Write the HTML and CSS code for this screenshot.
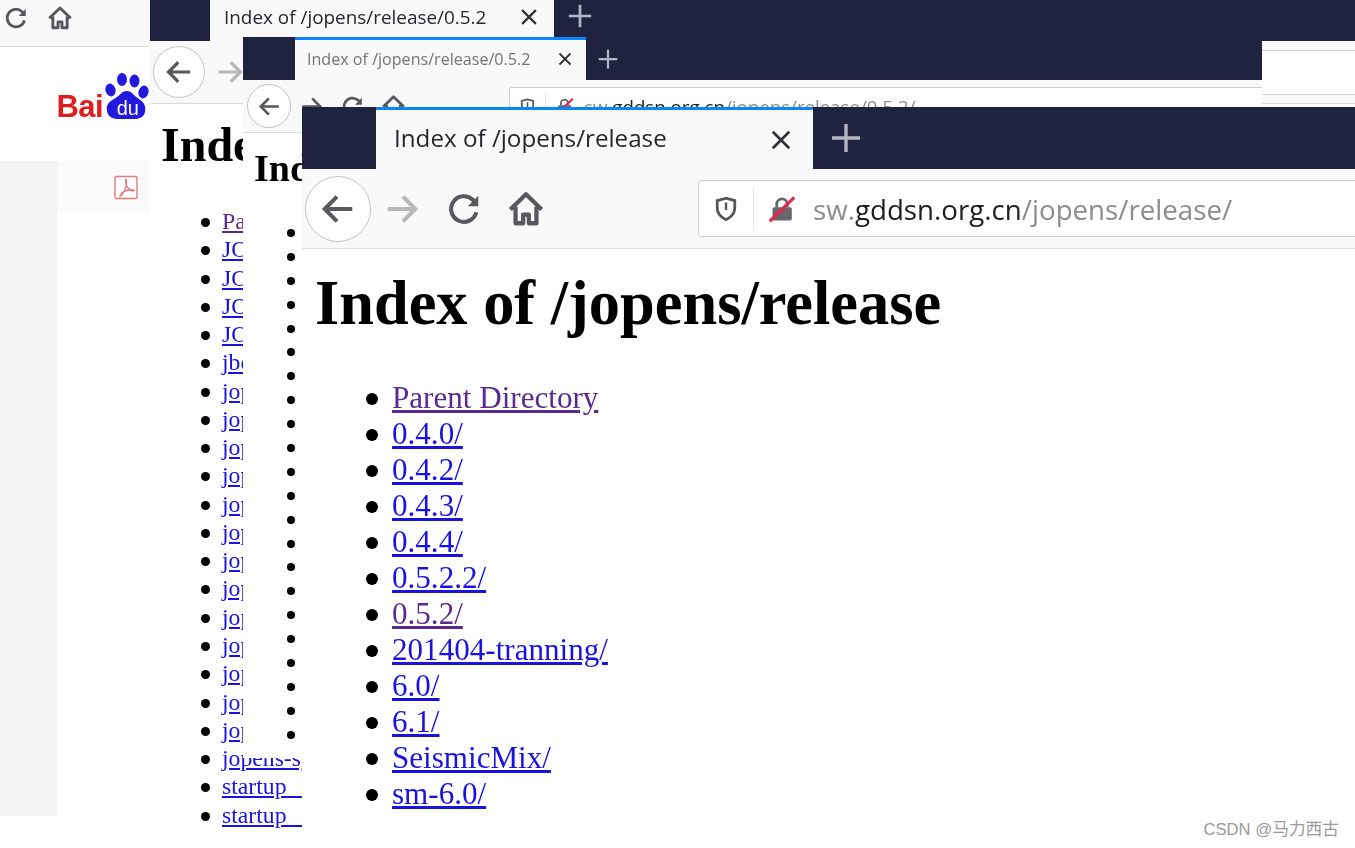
FILE: index.html
```html
<!DOCTYPE html>
<html lang="en">
<head>
    <meta charset="UTF-8">
    <meta name="viewport" content="width=device-width, initial-scale=1.0">
    <title>Index of /jopens/release</title>
    <link rel="stylesheet" href="styles.css">
</head>
<body>
    <svg class="defs" width="0" height="0">
        <symbol id="i-back" viewBox="0 0 16 16"><path d="M14 8H2.6M7.6 2.8 2.4 8l5.2 5.2" fill="none" stroke="currentColor" stroke-width="1.7"/></symbol>
        <symbol id="i-forward" viewBox="0 0 16 16"><path d="M2 8h11.4M8.4 2.8 13.6 8l-5.2 5.2" fill="none" stroke="currentColor" stroke-width="1.7"/></symbol>
        <symbol id="i-reload" viewBox="0 0 16 16"><path d="M13.2 9.4A5.4 5.4 0 1 1 11.6 4L13.2 5.6" fill="none" stroke="currentColor" stroke-width="1.7"/><path d="M14 2.4v4.4H9.6z" fill="currentColor"/></symbol>
        <symbol id="i-home" viewBox="0 0 16 16"><path d="M1.4 8.2 8 1.8l6.6 6.4M3.6 7v7h3.2v-3.6h2.4V14h3.2V7" fill="none" stroke="currentColor" stroke-width="1.8" stroke-linejoin="round"/></symbol>
        <symbol id="i-close" viewBox="0 0 16 16"><path d="M2.5 2.5l11 11M13.5 2.5l-11 11" fill="none" stroke="currentColor" stroke-width="1.8"/></symbol>
        <symbol id="i-plus" viewBox="0 0 16 16"><path d="M8 .5v15M.5 8h15" fill="none" stroke="currentColor" stroke-width="1.8"/></symbol>
        <symbol id="i-shield" viewBox="0 0 16 16"><path d="M8 1.4 2.6 2.8v4.6c0 3.2 2.4 5.8 5.4 7.2 3-1.4 5.4-4 5.4-7.2V2.8z" fill="none" stroke="#55555c" stroke-width="1.7"/><path d="M8 4v4.6" stroke="#55555c" stroke-width="1.5"/></symbol>
        <symbol id="i-lock" viewBox="0 0 16 16"><path d="M5 7V5.2a3 3 0 0 1 6 0V7" fill="none" stroke="#66666c" stroke-width="1.6"/><rect x="2.6" y="7" width="11" height="7.6" rx="1" fill="#66666c"/><path d="M1 15 15 1.4" stroke="#e22850" stroke-width="1.8"/></symbol>
    </svg>

    <!-- oldest window, only its left edge shows -->
    <div class="win win-old">
        <div class="toolbar">
            <svg class="icon"><use href="#i-reload"/></svg>
            <svg class="icon"><use href="#i-home"/></svg>
        </div>
        <div class="baidu">
            <span class="bai">Bai</span>
            <svg class="paw" viewBox="0 0 44 46">
                <ellipse cx="17" cy="6.5" rx="5" ry="6.5" fill="#2319dc"/>
                <ellipse cx="29.5" cy="8" rx="5" ry="6.5" fill="#2319dc"/>
                <ellipse cx="5.5" cy="17" rx="5" ry="6.5" fill="#2319dc" transform="rotate(-15 5.5 17)"/>
                <ellipse cx="38.5" cy="19" rx="5" ry="6.5" fill="#2319dc" transform="rotate(15 38.5 19)"/>
                <path d="M22 18c5 0 7 5 12 8 6 4 7 8 6 13-1 5-6 7-10 7H13c-5 0-10-2-11-8-1-5 1-9 7-12 6-3 7-8 13-8z" fill="#2319dc"/>
            </svg>
            <span class="du">du</span>
        </div>
        <div class="lower">
            <div class="side"></div>
            <div class="pdfbar">
                <svg class="pdf" viewBox="0 0 24 24"><rect x="1" y="1" width="22" height="22" rx="2" fill="#fff" stroke="#e8787a" stroke-width="1.4"/><path d="M12 3.5c-.8 3 .4 7 2 9 1.5 2 4 3 6 2.5-2-1.5-6-.5-9 .5-2 .8-4 3-5 5 2-.5 4.5-5 6-9 .5-2.5.6-5.5 0-8z" fill="none" stroke="#e8787a" stroke-width="1.4"/></svg>
            </div>
        </div>
    </div>

    <div class="win win-a">
        <div class="tabstrip">
            <div class="tab">
                <span class="tab-title">Index of /jopens/release/0.5.2</span>
                <svg class="close"><use href="#i-close"/></svg>
            </div>
            <svg class="plus"><use href="#i-plus"/></svg>
        </div>
        <div class="toolbar">
            <span class="backbtn"><svg class="icon"><use href="#i-back"/></svg></span>
            <svg class="icon fwd"><use href="#i-forward"/></svg>
            <div class="urlbar"></div>
        </div>
        <div class="page">
            <h1>Index of /jopens/release/0.5.2</h1>
            <ul>
                <li><a class="seen" href="#">Parent Directory</a></li>
                <li><a href="#">JOPENS-Linux.tar</a></li>
                <li><a href="#">JOPENS-Linux.zip</a></li>
                <li><a href="#">JOPENS-Win32.zip</a></li>
                <li><a href="#">JOPENS-Win64.zip</a></li>
                <li><a href="#">jboss-4.2.tar.gz</a></li>
                <li><a href="#">jopens-client.tar</a></li>
                <li><a href="#">jopens-db.tar</a></li>
                <li><a href="#">jopens-doc.tar</a></li>
                <li><a href="#">jopens-gsm.tar</a></li>
                <li><a href="#">jopens-mss.tar</a></li>
                <li><a href="#">jopens-nmx.tar</a></li>
                <li><a href="#">jopens-rts.tar</a></li>
                <li><a href="#">jopens-sds.tar</a></li>
                <li><a href="#">jopens-seed.tar</a></li>
                <li><a href="#">jopens-sma.tar</a></li>
                <li><a href="#">jopens-ssh.tar</a></li>
                <li><a href="#">jopens-sta.tar</a></li>
                <li><a href="#">jopens-svr.tar</a></li>
                <li><a href="#">jopens-sys.tar</a></li>
                <li><a href="#">startup__a.sh</a></li>
                <li><a href="#">startup__b.sh</a></li>
            </ul>
        </div>
    </div>

    <div class="win win-b">
        <div class="tabstrip">
            <div class="tab">
                <span class="tab-title">Index of /jopens/release/0.5.2</span>
                <svg class="close"><use href="#i-close"/></svg>
            </div>
            <svg class="plus"><use href="#i-plus"/></svg>
        </div>
        <div class="toolbar">
            <span class="backbtn"><svg class="icon"><use href="#i-back"/></svg></span>
            <svg class="icon fwd dark"><use href="#i-forward"/></svg>
            <svg class="icon"><use href="#i-reload"/></svg>
            <svg class="icon"><use href="#i-home"/></svg>
            <div class="urlbar">
                <svg class="shield"><use href="#i-shield"/></svg>
                <span class="sep"></span>
                <svg class="lock"><use href="#i-lock"/></svg>
                <span class="url">sw.<b>gddsn.org.cn</b>/jopens/release/0.5.2/</span>
            </div>
        </div>
        <div class="page">
            <h1>Index of /jopens/release/0.5.2</h1>
            <ul>
                <li></li><li></li><li></li><li></li><li></li><li></li>
                <li></li><li></li><li></li><li></li><li></li><li></li>
                <li></li><li></li><li></li><li></li><li></li><li></li>
                <li></li><li></li><li></li><li></li>
            </ul>
        </div>
    </div>

    <div class="win win-c">
        <div class="tabstrip">
            <div class="tab">
                <span class="tab-title">Index of /jopens/release</span>
                <svg class="close"><use href="#i-close"/></svg>
            </div>
            <svg class="plus"><use href="#i-plus"/></svg>
        </div>
        <div class="toolbar">
            <span class="backbtn"><svg class="icon"><use href="#i-back"/></svg></span>
            <svg class="icon fwd"><use href="#i-forward"/></svg>
            <svg class="icon"><use href="#i-reload"/></svg>
            <svg class="icon"><use href="#i-home"/></svg>
            <div class="urlbar">
                <svg class="shield"><use href="#i-shield"/></svg>
                <span class="sep"></span>
                <svg class="lock"><use href="#i-lock"/></svg>
                <span class="url">sw.<b>gddsn.org.cn</b>/jopens/release/</span>
            </div>
        </div>
        <div class="page">
            <h1>Index of /jopens/release</h1>
            <ul>
                <li><a class="seen" href="#">Parent Directory</a></li>
                <li><a href="#">0.4.0/</a></li>
                <li><a href="#">0.4.2/</a></li>
                <li><a href="#">0.4.3/</a></li>
                <li><a href="#">0.4.4/</a></li>
                <li><a href="#">0.5.2.2/</a></li>
                <li><a class="seen" href="#">0.5.2/</a></li>
                <li><a href="#">201404-tranning/</a></li>
                <li><a href="#">6.0/</a></li>
                <li><a href="#">6.1/</a></li>
                <li><a href="#">SeismicMix/</a></li>
                <li><a href="#">sm-6.0/</a></li>
            </ul>
        </div>
    </div>

    <div class="watermark">CSDN @马力西古</div>
</body>
</html>
```

FILE: styles.css
```css
html, body {
    margin: 0;
    height: 100%;
    overflow: hidden;
    background-color: #fff;
}
body {
    position: relative;
    width: 1355px;
    height: 848px;
}
.defs {
    position: absolute;
}

/* windows are pasted over each other like on a desktop */
.win {
    position: absolute;
    overflow: hidden;
    background-color: #fff;
    font-family: "Liberation Serif", serif;
    color: #000;
    filter: blur(.35px);
}
.win-old {
    left: 0;
    top: 0;
    width: 150px;
    height: 848px;
}
.win-a {
    left: 150px;
    top: 0;
    width: 1205px;
    height: 830px;
}
.win-b {
    left: 243px;
    top: 37px;
    width: 1019px;
    height: 721px;
}
.win-c {
    left: 302px;
    top: 107px;
    width: 1053px;
    height: 725px;
}

/* tab strip */
.tabstrip {
    display: flex;
    align-items: center;
    background-color: #20233f;
}
.tab {
    display: flex;
    align-items: center;
    justify-content: space-between;
    box-sizing: border-box;
    height: 100%;
    background-color: #f9f9fa;
    font-family: "Open Sans", sans-serif;
    color: #26262c;
}
.close {
    color: #303036;
}
.plus {
    color: #b4b5c4;
}

/* toolbar */
.toolbar {
    display: flex;
    align-items: center;
    box-sizing: border-box;
    background-color: #f9f9fa;
    border-bottom: 1px solid #dcdcde;
    color: #58585e;
}
.backbtn {
    display: flex;
    align-items: center;
    justify-content: center;
    box-sizing: border-box;
    flex: none;
    border: 1.5px solid #c4c4c6;
    border-radius: 50%;
    background-color: #fff;
}
.fwd {
    color: #b8b8bb;
}
.fwd.dark {
    color: #58585e;
}
.icon {
    flex: none;
}
.urlbar {
    display: flex;
    align-items: center;
    flex: none;
    box-sizing: border-box;
    background-color: #fff;
    border: 1px solid #cfcfd2;
    border-radius: 3px;
    font-family: "Open Sans", sans-serif;
    color: #8c8c90;
    white-space: nowrap;
}
.url b {
    font-weight: 400;
    color: #1e1e22;
}
.sep {
    align-self: stretch;
    width: 1px;
    background-color: #e6e6e8;
}
.page h1 {
    margin: 0;
    white-space: nowrap;
}
.page ul {
    margin: 0;
    list-style: none;
    white-space: nowrap;
}
.page li::before {
    content: "";
    display: inline-block;
    border-radius: 50%;
    background-color: #000;
}
.page a {
    color: #1a12e0;
}
.page a.seen {
    color: #5a2a90;
}

/* window a */
.win-a .tabstrip {
    height: 41px;
    padding-left: 60px;
}
.win-a .tab {
    width: 344px;
    padding: 0 15px 8px 14px;
}
.win-a .tab-title {
    font-size: 18.9px;
}
.win-a .close {
    width: 20px;
    height: 20px;
}
.win-a .plus {
    width: 24px;
    height: 24px;
    margin: 0 0 10px 14px;
}
.win-a .toolbar {
    height: 63px;
    padding-left: 3px;
    gap: 10px;
}
.win-a .backbtn {
    width: 52px;
    height: 52px;
}
.win-a .icon {
    width: 30px;
    height: 30px;
}
.win-a .urlbar {
    height: 45px;
    width: 900px;
    margin-left: 300px;
}
.win-a .page {
    padding: 14px 11px;
}
.win-a h1 {
    font-size: 48px;
    line-height: 54px;
}
.win-a ul {
    margin-top: 35px;
    padding-left: 61px;
    font-size: 23.7px;
    line-height: 28.28px;
}
.win-a li {
    height: 28.28px;
}
.win-a li::before {
    width: 9px;
    height: 9px;
    margin: 0 12px 2px -21px;
}

/* window b */
.win-b .tabstrip {
    height: 43px;
    padding-left: 52px;
}
.win-b .tab {
    width: 291px;
    padding: 0 13px 3px 12px;
    border-top: 3px solid #0a84ff;
    color: #737378;
}
.win-b .tab-title {
    font-size: 16.1px;
}
.win-b .close {
    width: 16px;
    height: 16px;
}
.win-b .plus {
    width: 20px;
    height: 20px;
    margin-left: 12px;
}
.win-b .toolbar {
    height: 53px;
    padding-left: 4px;
    gap: 0;
}
.win-b .backbtn {
    width: 44px;
    height: 44px;
}
.win-b .icon {
    width: 25px;
    height: 25px;
}
.win-b .backbtn + .icon {
    margin-left: 8px;
}
.win-b .icon + .icon {
    margin-left: 16px;
}
.win-b .urlbar {
    width: 900px;
    height: 38px;
    margin-left: 103px;
    padding-left: 9px;
}
.win-b .shield {
    width: 17px;
    height: 17px;
}
.win-b .sep {
    margin: 4px 9px;
}
.win-b .lock {
    width: 19px;
    height: 19px;
}
.win-b .url {
    font-size: 18.7px;
    margin-left: 10px;
}
.win-b .page {
    padding: 13px 11px;
}
.win-b h1 {
    font-size: 38px;
    line-height: 44px;
}
.win-b ul {
    margin-top: 31px;
    padding-left: 49px;
    font-size: 20px;
    line-height: 23.9px;
}
.win-b li {
    height: 23.9px;
}
.win-b li::before {
    width: 8px;
    height: 8px;
    margin: 0 8px 2px -16px;
}

/* window c */
.win-c .tabstrip {
    height: 62px;
    padding-left: 74px;
}
.win-c .tab {
    width: 437px;
    padding: 0 20px 0 18px;
    border-top: 3px solid #0a84ff;
}
.win-c .tab-title {
    font-size: 24.2px;
    margin-bottom: 5px;
}
.win-c .close {
    width: 24px;
    height: 24px;
}
.win-c .plus {
    width: 30px;
    height: 30px;
    margin-left: 18px;
}
.win-c .toolbar {
    height: 80px;
    padding-left: 3px;
    gap: 0;
}
.win-c .backbtn {
    width: 66px;
    height: 66px;
}
.win-c .icon {
    width: 38px;
    height: 38px;
}
.win-c .backbtn + .icon {
    margin-left: 12px;
}
.win-c .icon + .icon {
    margin-left: 24px;
}
.win-c .urlbar {
    width: 700px;
    height: 57px;
    margin-left: 153px;
    padding-left: 14px;
}
.win-c .shield {
    width: 26px;
    height: 26px;
}
.win-c .sep {
    margin: 6px 14px;
}
.win-c .lock {
    width: 28px;
    height: 28px;
}
.win-c .url {
    font-size: 27.7px;
    margin-left: 17px;
}
.win-c .page {
    padding: 20px 13px;
}
.win-c h1 {
    font-size: 62.4px;
    line-height: 68px;
}
.win-c ul {
    margin-top: 43px;
    padding-left: 77px;
    font-size: 31.1px;
    line-height: 36px;
}
.win-c li {
    height: 36px;
}
.win-c li::before {
    width: 12px;
    height: 12px;
    margin: 0 14px 3px -26px;
}

/* bits of the oldest window */
.win-old .toolbar {
    height: 47px;
    padding: 0 0 10px 3px;
    gap: 18px;
}
.win-old .icon {
    width: 26px;
    height: 26px;
}
.baidu {
    display: flex;
    align-items: flex-end;
    justify-content: flex-end;
    position: relative;
    height: 114px;
    box-sizing: border-box;
    padding: 0 1px 42px 0;
}
.bai {
    font-family: "Liberation Sans", sans-serif;
    font-weight: 700;
    font-size: 31px;
    line-height: 24px;
    letter-spacing: -.6px;
    color: #de1e1e;
}
.paw {
    width: 44px;
    height: 46px;
    margin-left: 2px;
}
.du {
    position: absolute;
    right: 11px;
    bottom: 43px;
    font-family: "Liberation Sans", sans-serif;
    font-size: 20px;
    line-height: 20px;
    color: #fff;
}
.lower {
    display: flex;
    height: 655px;
}
.side {
    width: 57px;
    background-color: #f3f3f4;
}
.pdfbar {
    flex: 1;
    height: 52px;
    display: flex;
    align-items: center;
    justify-content: flex-end;
    padding-right: 12px;
    background-color: #fafafa;
}
.pdf {
    width: 24px;
    height: 25px;
}

.watermark {
    position: absolute;
    right: 16px;
    bottom: 8px;
    font-family: "Liberation Sans", "Noto Sans CJK SC", sans-serif;
    font-size: 16.7px;
    line-height: 20px;
    color: #9a9a9a;
}
```
